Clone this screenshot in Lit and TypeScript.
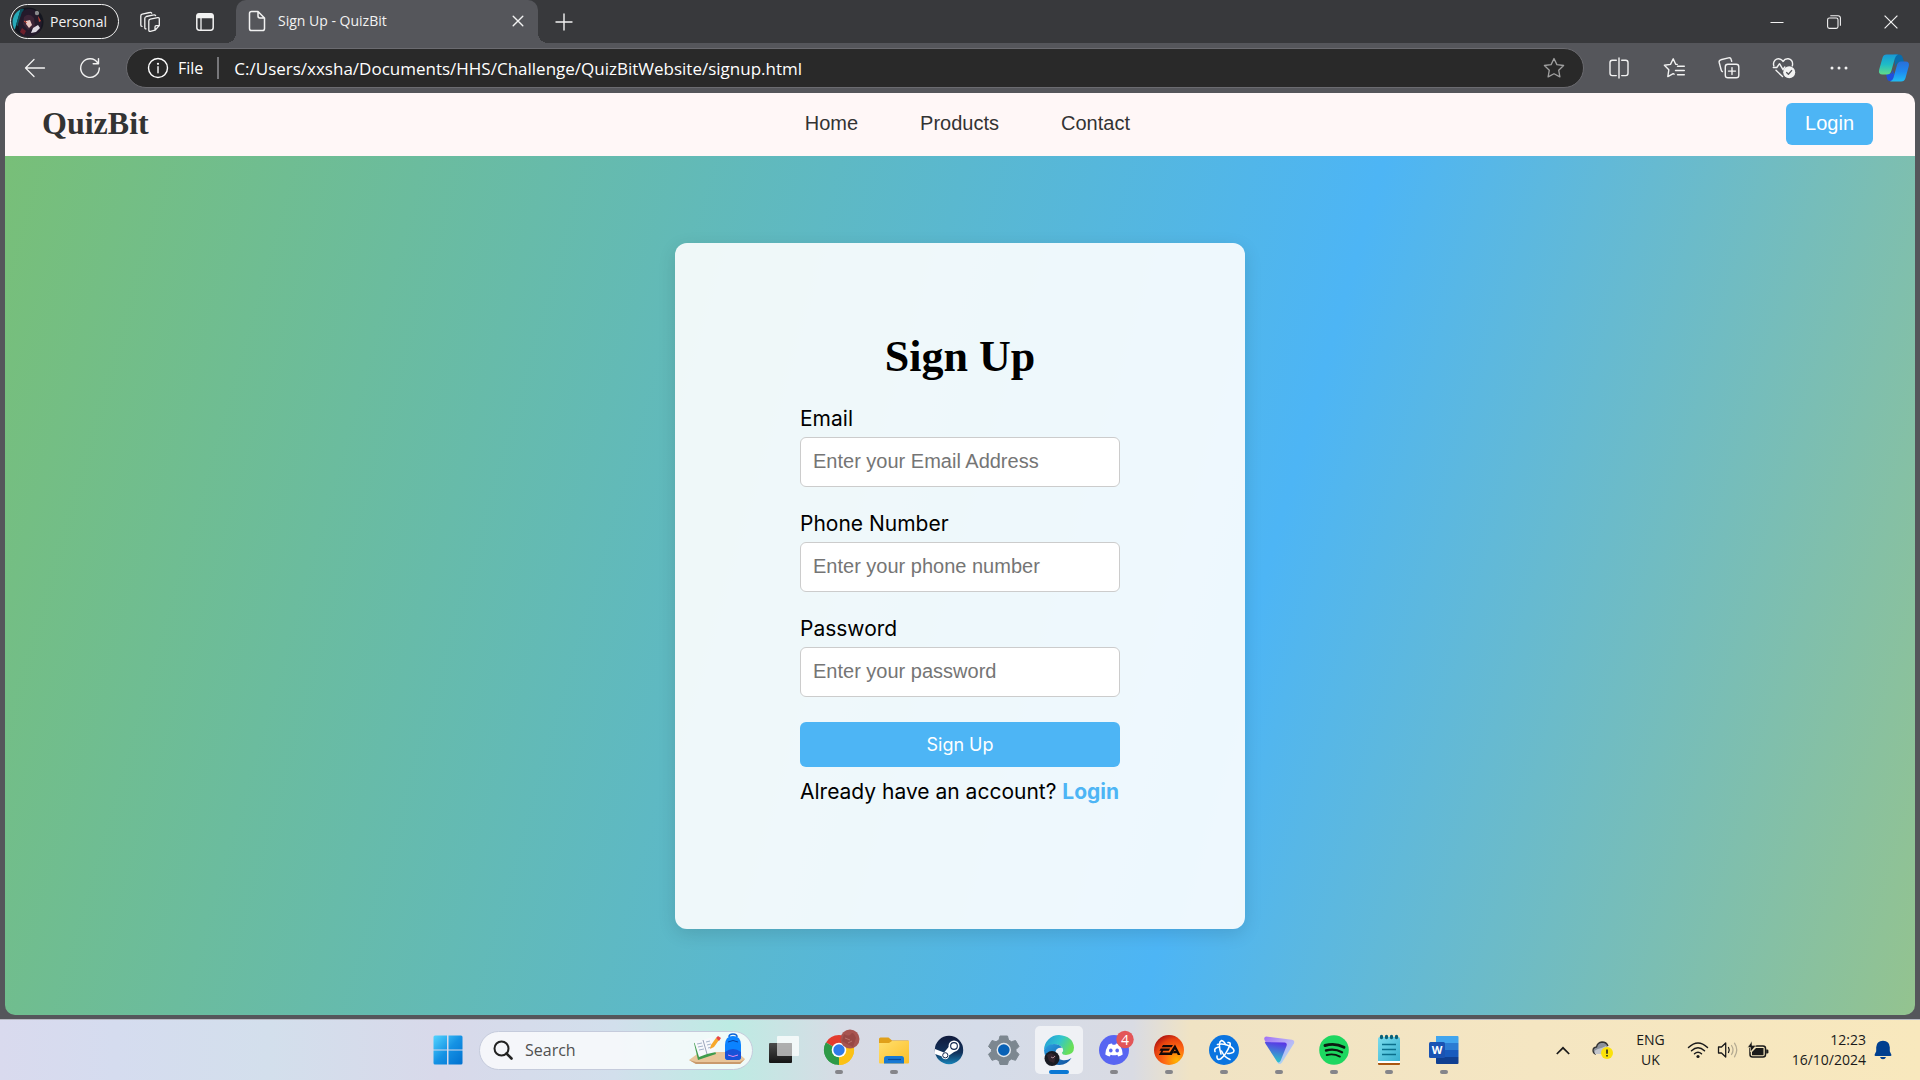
import { LitElement, html, css, nothing } from "lit";
import type { TemplateResult } from "lit";
import { customElement } from "lit/decorators.js";
import { classMap } from "lit/directives/class-map.js";

const icons = {
  workspaces: html`<svg width="22" height="22" viewBox="0 0 22 22" fill="none" stroke="currentColor" stroke-width="1.3" stroke-linejoin="round" stroke-linecap="round">
    <path d="M11.3 8.2 18.6 6.6Q20.3 6.3 20.3 8V14.6L16 19.2 11.4 20.3Q9.8 20.6 9.8 19V10Q9.8 8.5 11.3 8.2ZM20.2 14.6H17.3Q16 14.6 16 15.9V19" />
    <path d="M7 17.8Q5.8 17.9 5.8 16.4V7.4Q5.8 5.9 7.2 5.5L14.8 3.9Q16 3.6 16.6 4.6" />
    <path d="M3 15.4Q1.8 15.3 1.8 14V4.9Q1.8 3.4 3.2 3.1L10.8 1.5Q12 1.2 12.7 2.2" />
  </svg>`,
  tabActions: html`<svg width="20" height="20" viewBox="0 0 20 20">
    <rect x="1.8" y="1.8" width="16.4" height="16.4" rx="2.6" fill="none" stroke="currentColor" stroke-width="1.5" />
    <path d="M1.5 6.2V4Q1.5 1.5 4 1.5h12Q18.5 1.5 18.5 4v2.200z" fill="currentColor" />
    <path d="M6 6v12" stroke="currentColor" stroke-width="1.3" />
  </svg>`,
  page: html`<svg width="18" height="22" viewBox="0 0 18 22" fill="none" stroke="currentColor" stroke-width="1.5" stroke-linejoin="round">
    <path d="M3.600 1.500H10L16.500 8v10.400q0 2.100-2.100 2.100H3.600q-2.100 0-2.100-2.100V3.600q0-2.100 2.100-2.100zM10 1.500v4.600Q10 8 11.900 8h4.600" />
  </svg>`,
  close: html`<svg width="12" height="12" viewBox="0 0 12 12" fill="none" stroke="currentColor" stroke-width="1.4" stroke-linecap="round"><path d="M1.200 1.200l9.600 9.600M10.800 1.200l-9.600 9.600" /></svg>`,
  plus: html`<svg width="18" height="18" viewBox="0 0 18 18" fill="none" stroke="currentColor" stroke-width="1.4" stroke-linecap="round"><path d="M9 1v16M1 9h16" /></svg>`,
  minimise: html`<svg width="14" height="14" viewBox="0 0 14 14" stroke="currentColor"><path d="M.5 7.500h13" /></svg>`,
  restore: html`<svg width="14" height="14" viewBox="0 0 14 14" fill="none" stroke="currentColor" stroke-width="1.100">
    <rect x=".6" y="3" width="10.400" height="10.400" rx="1.800" /><path d="M3.300.7h7.700q2.400 0 2.400 2.400v7.700" />
  </svg>`,
  winClose: html`<svg width="14" height="14" viewBox="0 0 14 14" fill="none" stroke="currentColor" stroke-width="1.200"><path d="M.6.6l12.800 12.800M13.400.6L.6 13.400" /></svg>`,
  back: html`<svg width="22" height="20" viewBox="0 0 22 20" fill="none" stroke="currentColor" stroke-width="1.300" stroke-linecap="round" stroke-linejoin="round"><path d="M10 1.500L1.500 10l8.500 8.500M1.500 10h19" /></svg>`,
  reload: html`<svg width="22" height="22" viewBox="0 0 22 22" fill="none" stroke="currentColor" stroke-width="1.400" stroke-linecap="round" stroke-linejoin="round"><path d="M18.800 6A9.300 9.300 0 1 0 20.300 11M19.500 1.600v5.200h-5.300" /></svg>`,
  info: html`<svg width="22" height="22" viewBox="0 0 22 22" fill="none" stroke="currentColor" stroke-width="1.400"><circle cx="11" cy="11" r="9.500" /><path d="M11 9.700v6" stroke-linecap="round" /><circle cx="11" cy="6.800" r="1.100" fill="currentColor" stroke="none" /></svg>`,
  star: html`<svg width="22" height="22" viewBox="0 0 22 22" fill="none" stroke="currentColor" stroke-width="1.300" stroke-linejoin="round"><path d="M11 1.500l2.900 6.100 6.700.9-4.900 4.700 1.200 6.700L11 16.700l-5.900 3.200 1.200-6.700L1.400 8.500l6.700-.9z" /></svg>`,
  split: html`<svg width="20" height="22" viewBox="0 0 20 22" fill="none" stroke="currentColor" stroke-width="1.400" stroke-linecap="round"><path d="M7.300 3.200H3.300Q1 3.200 1 5.500v10.800q0 2.300 2.300 2.300h4M12.700 3.200h4Q19 3.200 19 5.500v10.800q0 2.300-2.300 2.300h-4M10 1v20" /></svg>`,
  favourites: html`<svg width="22" height="22" viewBox="0 0 22 22" fill="none" stroke="currentColor" stroke-width="1.400" stroke-linecap="round" stroke-linejoin="round"><path d="M14.200 7.400l-1.500-.2L10.200 1.800 7.500 7.400l-6.100.9 4.400 4.500-1 6.800 5.400-2.900.9.500M14.500 9.200h6.800M12.500 13.500h8.800M14.500 17.800h6.800" /></svg>`,
  collections: html`<svg width="22" height="22" viewBox="0 0 22 22" fill="none" stroke="currentColor" stroke-width="1.400" stroke-linecap="round" stroke-linejoin="round"><rect x="7.300" y="7.300" width="13.500" height="13.500" rx="2.600" /><path d="M14 10.600v7M10.500 14.100h7M4.400 14.600Q3.500 14.200 3.200 13L1.200 5.500Q.7 3.400 2.800 2.800L10.500.9q2.200-.5 2.700 1.600l.5 1.900" /></svg>`,
  health: html`<svg width="24" height="22" viewBox="0 0 24 22" fill="none" stroke="currentColor" stroke-width="1.400" stroke-linecap="round" stroke-linejoin="round">
    <path d="M1.800 8.800Q.8 5.600 3 3.200q2.600-2.500 5.700-.8Q10.200 3.200 11 4.500q2-3.100 5.300-2.700 4.300.8 4.300 5.300 0 1-.3 1.800M1.300 10.500h3.500L7.500 6.700l3.500 6 1.800-2.700M4 13.300l6.500 6.200" />
    <circle cx="17.200" cy="15.200" r="6" fill="currentColor" stroke="none" /><path d="M14.600 15.600l1.800 1.600 3.200-3.600" stroke="#55565b" />
  </svg>`,
  dots: html`<svg width="18" height="4" viewBox="0 0 18 4" fill="currentColor"><circle cx="2" cy="2" r="1.500" /><circle cx="9" cy="2" r="1.500" /><circle cx="16" cy="2" r="1.500" /></svg>`,
  copilot: html`<svg width="32" height="30" viewBox="0 0 32 30">
    <defs>
      <linearGradient id="cpA" x1="0" y1="0" x2="0" y2="1"><stop offset="0" stop-color="#1899d6" /><stop offset=".5" stop-color="#1fbcc6" /><stop offset="1" stop-color="#62dc88" /></linearGradient>
      <linearGradient id="cpB" x1="0" y1="0" x2="0" y2="1"><stop offset="0" stop-color="#2a6fd8" /><stop offset=".5" stop-color="#1e88f0" /><stop offset="1" stop-color="#20bdf2" /></linearGradient>
    </defs>
    <path d="M16 1.500h5q2.800 0 3.700 3L26 9h-3.500q-3 0-4.500 3l-1 2z" fill="#0a6cab" />
    <path d="M8 21h3q3-.5 4-4l1.500 4-1.500 7h-3.500Q9.500 28 8.800 24.500z" fill="#1f4fdc" />
    <path d="M8.500 1.500H20q-2.300.8-3.200 4L13.300 18q-1 3.500-4.500 3.500H4.500Q0 21.500 1.200 16.500L4.600 4.600Q5.500 1.500 8.500 1.500z" fill="url(#cpA)" />
    <path d="M18 10.500L15.500 19.500q-.9 1.500-1.900 1.500 1.300-1 1.900-3z" fill="#55565b" />
    <path d="M23 8.500h4.500q4.300 0 3.300 4.500l-3.300 12q-1 3.500-4.500 3.500H12q2.500-.5 3.400-3.500L19 12q1-3.500 4-3.500z" fill="url(#cpB)" />
  </svg>`,
  avatar: html`<svg width="32" height="30" viewBox="0 0 32 30">
    <defs><clipPath id="av"><ellipse cx="16" cy="15" rx="15.500" ry="14.500" /></clipPath></defs>
    <g clip-path="url(#av)">
      <rect width="32" height="30" fill="#14161f" />
      <path d="M0 30V3L9 1 3 22z" fill="#28a9b8" /><path d="M9 1l3 1-6 17-2-1z" fill="#0d5360" />
      <path d="M10 5q6-6 14-1l6 11-3 15H9L6 17z" fill="#241a2b" />
      <path d="M12 10q5-5 10 1l1 9-7 3-5-6z" fill="#3d2537" />
      <path d="M14 14l4-1 2 5-3 3-3-4z" fill="#e9c7c2" /><path d="M21 21l5-3 2 3-4 4-5 1z" fill="#ded9e2" />
      <circle cx="25" cy="6" r="2.200" fill="#8a8a8d" /><path d="M26 9l3 5-2 1z" fill="#bd4134" /><path d="M10 21l4 3-2 4-4-3z" fill="#6d1f2b" /><path d="M12 14l3 2" stroke="#d4523e" />
    </g>
  </svg>`,
  start: html`<svg width="30" height="30" viewBox="0 0 30 30"><defs><linearGradient id="wn" x1="0" y1="0" x2="1" y2="1"><stop offset="0" stop-color="#52d4ff" /><stop offset=".5" stop-color="#1592e4" /><stop offset="1" stop-color="#0070cf" /></linearGradient></defs>
    <path d="M2 .5h12v14H.5V2Q.5.5 2 .5zM15.500.5H28q1.500 0 1.500 1.500v12.500h-14zM.5 15.500H14v14H2q-1.500 0-1.500-1.500zM15.500 15.500h14V28q0 1.500-1.500 1.500H15.500z" fill="url(#wn)" /></svg>`,
  magnifier: html`<svg width="20" height="20" viewBox="0 0 20 20" fill="none" stroke="#222" stroke-width="2"><circle cx="8.500" cy="8.500" r="7" /><path d="M13.500 13.500l5 5" stroke-width="2.600" stroke-linecap="round" /></svg>`,
  studyArt: html`<svg width="58" height="34" viewBox="0 0 58 34">
    <path d="M1 27L12 19H49l8 7-5 5H8z" fill="#e8c59a" /><path d="M1 27l7 2h44l5-3-5 5H8z" fill="#c99a6d" />
    <path d="M6 10l17-4 5 15-18 6z" fill="#3f9b4c" /><path d="M6 8l9-1 9-3 4 15-9 2-8 3z" fill="#f7f8fc" /><path d="M15 7l4 14" stroke="#9aa3b8" />
    <path d="M9 11l5-1M10 14l5-1M11 17l5-1M18 9l4-1M19 12l4-1M20 15l4-1" stroke="#a5b3c9" />
    <path d="M22 16l1-4 5-7 3 2-5 7z" fill="#f7a82a" /><path d="M28 5l2-2 3 2-2 3z" fill="#e84545" />
    <path d="M41 4q0-3 4-3t4 3" fill="none" stroke="#0e62d6" stroke-width="1.500" />
    <path d="M37 12q0-9 8-9t8 9v12q0 3-3 3H40q-3 0-3-3z" fill="#0b83ff" /><path d="M37 19q8-6 16 0v5q0 3-3 3H40q-3 0-3-3z" fill="#1652d8" /><path d="M40 22q5 3 10 0" stroke="#e58af0" fill="none" /><path d="M40 9q5-3 10 0" stroke="#073f9f" fill="none" />
  </svg>`,
};

const taskIcons: Record<string, TemplateResult> = {
  view: html`<svg width="32" height="32" viewBox="0 0 32 32"><defs><linearGradient id="tv" x1="0" y1="0" x2="0" y2="1"><stop offset="0" stop-color="#4b4b4b" /><stop offset="1" stop-color="#151515" /></linearGradient></defs>
    <rect x="1" y="9" width="23" height="20" rx="1" fill="url(#tv)" /><rect x="9" y="2" width="22" height="20" rx="1" fill="#fff" fill-opacity=".75" /><path d="M9 9h15v13H9z" fill="#8b8b8b" fill-opacity=".5" /></svg>`,
  chrome: html`<svg width="38" height="38" viewBox="0 0 38 38">
    <path d="M19 19L6 11.500A15 15 0 0 1 32 11.500z" fill="#e33b2e" /><path d="M19 19L32 11.500A15 15 0 0 1 19 34z" fill="#fbc116" /><path d="M19 19L19 34A15 15 0 0 1 6 11.500z" fill="#2d9a47" />
    <path d="M19 12h13.300a15 15 0 0 1-13.300 22l6-11.500z" fill="#fbc116" /><path d="M6 11.500l6.900 11 6.400 3.500-4 7.500A15 15 0 0 1 6 11.500z" fill="#2d9a47" />
    <circle cx="19" cy="19" r="7.300" fill="#fff" /><circle cx="19" cy="19" r="5.700" fill="#2e7bea" />
    <circle cx="30" cy="8" r="9.500" fill="#a75450" /><path d="M24 3q5 3 7 0t5 4l-3 9-6-3-5-3z" fill="#984845" /><path d="M25 7l5 2M28 12l4-2" stroke="#b9736c" fill="none" /></svg>`,
  folder: html`<svg width="32" height="30" viewBox="0 0 32 30"><defs><linearGradient id="fd" x1="0" y1="0" x2="1" y2="1"><stop offset="0" stop-color="#ffdf6e" /><stop offset="1" stop-color="#fcbf28" /></linearGradient></defs>
    <path d="M1 4q0-1.500 1.500-1.500h8L14 5.500h16q1 0 1 1V12H1z" fill="#e0a01a" /><path d="M1 8h10l3-2h17v21.500q0 1-1 1H2q-1 0-1-1z" fill="url(#fd)" /><path d="M6 28.500v-5q0-2.500 2.500-2.500h15q2.500 0 2.500 2.500v5z" fill="#1879d3" /><path d="M10 24.500h13" stroke="#0a4c98" stroke-width="1.200" /></svg>`,
  steam: html`<svg width="30" height="30" viewBox="0 0 30 30"><defs><linearGradient id="st" x1="0" y1="0" x2="0" y2="1"><stop offset="0" stop-color="#101a3c" /><stop offset=".6" stop-color="#12335c" /><stop offset="1" stop-color="#1783b8" /></linearGradient></defs>
    <circle cx="15" cy="15" r="14.200" fill="url(#st)" /><path d="M1 14l9 3.500 5.500-6.500 6 5-6.500 4.500q0 3-3 3.700-3.500.3-4.500-3L1 19z" fill="#fff" /><circle cx="20" cy="11" r="5.500" fill="#fff" /><circle cx="20" cy="11" r="3.900" fill="#14294f" /><circle cx="20" cy="11" r="2.800" fill="#fff" /><circle cx="11.300" cy="20.300" r="2.600" fill="none" stroke="#14294f" /></svg>`,
  settings: html`<svg width="32" height="30" viewBox="0 0 32 30"><path d="M12 1h7.500l1 4 3 1.700 4-1.200 3.500 6-3 3v1.800l3 3-3.500 6-4-1.200-3 1.700-1 3.700H12l-1-3.700-3-1.700-4 1.200-3.500-6 3-3v-1.800l-3-3 3.500-6 4 1.200 3-1.700z" fill="#7c8790" stroke="#7c8790" stroke-linejoin="round" /><circle cx="15.800" cy="15" r="7.200" fill="#e3e8ee" /><circle cx="15.800" cy="15" r="5.800" fill="#0861b6" /></svg>`,
  edge: html`<svg width="32" height="32" viewBox="0 0 32 32"><defs>
      <linearGradient id="e1" x1="0" y1="0" x2="1" y2=".4"><stop offset="0" stop-color="#2497d8" /><stop offset=".55" stop-color="#31c5ce" /><stop offset="1" stop-color="#68df58" /></linearGradient>
      <linearGradient id="e2" x1="0" y1="0" x2="1" y2="1"><stop offset="0" stop-color="#2a9fe2" /><stop offset="1" stop-color="#0f4f9e" /></linearGradient></defs>
    <path d="M1 16A15 15 0 0 1 16 1q14 1 15 12.500 0 7-8 7.500-4 0-4-2.500 2-1.500.5-4.500Q16 9.500 10 10.500 4 11.500 1 16z" fill="url(#e1)" />
    <path d="M1 16q3-6 10-6 6 0 8 4-5-1-6.500 3.500-.7 7 6.500 8.500 5 1 9.500-2Q24 31 16.500 31 2 30.500 1 16z" fill="url(#e2)" />
    <circle cx="9" cy="24.500" r="7.500" fill="#191a22" /><path d="M4 21l4-2 5 3-2 7-5-2z" fill="#33242e" /><path d="M8 23l2 1 2-2" stroke="#a98b96" fill="none" /></svg>`,
  discord: html`<svg width="38" height="38" viewBox="0 0 38 38"><circle cx="19" cy="19" r="15" fill="#5865f2" />
    <path d="M13.500 13.500q2-1 3.500-1.100l.6 1.300h2.800l.6-1.300q1.500.1 3.500 1.100 3 5 3.200 10-2 1.700-4.400 2.100l-1-1.800q-3.300 1-6.600 0l-1 1.800q-2.400-.4-4.400-2.100.2-5 3.200-10z" fill="#fff" /><ellipse cx="15.800" cy="19.500" rx="1.800" ry="2" fill="#5865f2" /><ellipse cx="22.200" cy="19.500" rx="1.800" ry="2" fill="#5865f2" />
    <circle cx="30" cy="8.500" r="8.700" fill="#e35558" /></svg>`,
  ea: html`<svg width="32" height="32" viewBox="0 0 32 32"><defs><radialGradient id="ea" cx=".75" cy=".85" r=".9"><stop offset="0" stop-color="#ffb400" /><stop offset=".45" stop-color="#ff6a13" /><stop offset=".8" stop-color="#e8420f" /><stop offset="1" stop-color="#b91c10" /></radialGradient></defs>
    <circle cx="16" cy="16" r="15" fill="url(#ea)" /><path d="M10 11h10l-1.500 2.300H8.700zM7.700 14.500h9.500l-1.500 2.200h-5.400L9.200 18.500h7.500l5.300-8 5.500 10.400h-2.700l-.9-1.700h-4l1.200-2.100h1.700l-.9-1.800-3.100 5.600H5.800l2.600-4.200H6.500z" fill="#140808" /></svg>`,
  bnet: html`<svg width="32" height="32" viewBox="0 0 32 32"><circle cx="16" cy="16" r="15" fill="#0a74e0" /><g fill="none" stroke="#fff" stroke-width="1.600" stroke-linecap="round">
    <path d="M13 20Q9.500 8 13.500 6.500 16 7 17.500 10.500" /><path d="M9.500 10.500q6-1.500 12 1.500 6 3.500 4 6-1.500 1.500-6 1.500" /><path d="M22 11q-4 10-9.500 14-4 1.500-3.500-3" /><path d="M7 17.500q-1.500-3.500 4-4.500M20 8.500q3-.5 2 3M13.500 17q3 6.500 8.500 8.500" /></g></svg>`,
  proton: html`<svg width="32" height="30" viewBox="0 0 32 30"><defs><linearGradient id="p1" x1="0" y1="0" x2="1" y2="1"><stop offset="0" stop-color="#a06ff5" /><stop offset=".5" stop-color="#b9b0f7" /><stop offset="1" stop-color="#a7f0ee" /></linearGradient><linearGradient id="p2" x1=".6" y1="0" x2=".4" y2="1"><stop offset="0" stop-color="#5a35e6" /><stop offset="1" stop-color="#28c9c6" /></linearGradient></defs>
    <path d="M3 1.500l26 3.200q3 .5 2 3.500L19 27.500q-2.500 3-4.500 0L1.500 5Q.5 2 3 1.500z" fill="url(#p1)" /><path d="M1.800 7Q2.200 8.200 3 9.500l11 17q2 2 3.500-.5l6-15q1-3-1.500-3.500z" fill="url(#p2)" /></svg>`,
  spotify: html`<svg width="32" height="32" viewBox="0 0 32 32"><circle cx="16" cy="16" r="14.800" fill="#1ed760" /><g fill="none" stroke="#0b1a10" stroke-linecap="round"><path d="M7 11.500q10-3 19 1.800" stroke-width="2.900" /><path d="M8 16.500q8.500-2.300 16 1.700" stroke-width="2.400" /><path d="M8.700 21q7-1.800 13.200 1.600" stroke-width="1.900" /></g></svg>`,
  notepad: html`<svg width="24" height="32" viewBox="0 0 24 32"><defs><linearGradient id="np" x1="0" y1="0" x2="1" y2="1"><stop offset="0" stop-color="#7bdcee" /><stop offset="1" stop-color="#37b0cf" /></linearGradient></defs>
    <path d="M1 27h22v3q0 1-1 1H2q-1 0-1-1z" fill="#a9560f" /><path d="M1 25h22v4H1z" fill="#fff" /><path d="M3 3h18q2 0 2 2v22H1V5q0-2 2-2z" fill="url(#np)" /><path d="M5 10.500h14M5 15.500h14M5 20.500h14" stroke="#0b6f8c" stroke-width="1.500" /><g fill="#0a6078"><ellipse cx="4.500" cy="3" rx="1.700" ry="2.200" /><ellipse cx="9.500" cy="3" rx="1.700" ry="2.200" /><ellipse cx="14.500" cy="3" rx="1.700" ry="2.200" /><ellipse cx="19.500" cy="3" rx="1.700" ry="2.200" /></g></svg>`,
  word: html`<svg width="30" height="30" viewBox="0 0 30 30"><path d="M7 1h21.500q1 0 1 1v6H7z" fill="#41a5ee" /><path d="M7 8h22.500v7H7z" fill="#2b7cd3" /><path d="M7 15h22.500v7H7z" fill="#185abd" /><path d="M7 22h22.500v6q0 1-1 1H8q-1 0-1-1z" fill="#103f91" /><rect x="0" y="7" width="16" height="16" rx="1.500" fill="#1a53b3" /><text x="8" y="19" text-anchor="middle" fill="#fff" font-family="Open Sans, sans-serif" font-weight="700" font-size="11">W</text></svg>`,
};

const trayIcons = {
  chevron: html`<svg width="14" height="9" viewBox="0 0 14 9" fill="none" stroke="#1a1a1a" stroke-width="1.700"><path d="M.8 8L7 1.800 13.200 8" /></svg>`,
  cloud: html`<svg width="22" height="20" viewBox="0 0 22 20"><path d="M4 14Q1 13.500 1 10.500T4.500 7Q5.500 2.500 10 2q4.500 0 6 4" fill="#8b919b" stroke="#333" stroke-width="1.300" /><path d="M3 14q-1.500-4 3-5 4-1 8-3l2 5v3z" fill="#c3c6cc" /><circle cx="15" cy="13" r="6" fill="#fbe20a" /><path d="M15 9.500v4.300M15 15v1.600" stroke="#222" stroke-width="1.600" /></svg>`,
  wifi: html`<svg width="22" height="18" viewBox="0 0 22 18" fill="none" stroke="#1a1a1a" stroke-width="1.500" stroke-linecap="round"><path d="M1.500 6.500Q11-2.500 20.500 6.500M4.500 9.700q6.500-6 13 0M7.500 12.700q3.500-3 7 0" /><circle cx="11" cy="15.500" r="1.600" fill="#1a1a1a" stroke="none" /></svg>`,
  volume: html`<svg width="22" height="18" viewBox="0 0 22 18" fill="none" stroke="#1a1a1a" stroke-width="1.300" stroke-linecap="round" stroke-linejoin="round"><path d="M1.500 6h3l4.200-4v14l-4.200-4h-3zM11.500 6.500q1.500 2.500 0 5" /><path d="M14.500 4.500q3 4.500 0 9M17.500 2.200q4.500 6.800 0 13.600" stroke="#b5ab93" /></svg>`,
  battery: html`<svg width="22" height="18" viewBox="0 0 22 18"><rect x="3" y="5" width="15.500" height="11" rx="2.500" fill="none" stroke="#1a1a1a" stroke-width="1.500" /><path d="M5 14.200V11l4-4h7.500v7.200z" fill="#1a1a1a" /><path d="M19.200 8.500h1q1.200 0 1.200 1.200v1.600q0 1.200-1.200 1.200h-1z" fill="#1a1a1a" /><path d="M5 0v4.500h4L3.500 11V6.500H.5z" fill="#1a1a1a" stroke="#f7e7c0" stroke-width=".6" /></svg>`,
  bell: html`<svg width="18" height="20" viewBox="0 0 18 20" fill="#003f8f"><path d="M9 .8q6.500 0 6.800 6.500v4l1.600 3.500q.2 1.200-1 1.200H1.600q-1.200 0-1-1.200l1.600-3.500v-4Q2.500.8 9 .8zM6 17h6q-.7 2.300-3 2.300T6 17z" /></svg>`,
};

interface Field { id: string; label: string; type: string; placeholder: string; }
const fields: Field[] = [
  { id: "email", label: "Email", type: "email", placeholder: "Enter your Email Address" },
  { id: "phone", label: "Phone Number", type: "tel", placeholder: "Enter your phone number" },
  { id: "password", label: "Password", type: "password", placeholder: "Enter your password" },
];

interface Task { icon: string; name: string; running?: boolean; active?: boolean; badge?: string; }
const tasks: Task[] = [
  { icon: "view", name: "Task view" },
  { icon: "chrome", name: "Chrome", running: true },
  { icon: "folder", name: "File Explorer", running: true },
  { icon: "steam", name: "Steam" },
  { icon: "settings", name: "Settings" },
  { icon: "edge", name: "Edge", running: true, active: true },
  { icon: "discord", name: "Discord", running: true, badge: "4" },
  { icon: "ea", name: "EA", running: true },
  { icon: "bnet", name: "Battle.net", running: true },
  { icon: "proton", name: "Proton VPN", running: true },
  { icon: "spotify", name: "Spotify", running: true },
  { icon: "notepad", name: "Notepad", running: true },
  { icon: "word", name: "Word", running: true },
];

const base = css`
  :host { display: block; }
  * { box-sizing: border-box; }
  button, input { font: inherit; color: inherit; border: 0; margin: 0; padding: 0; background: none; min-width: 0; }
  a { color: inherit; text-decoration: none; }
  svg { display: block; flex: none; overflow: visible; }
`;

@customElement("browser-chrome")
export class BrowserChrome extends LitElement {
  static styles = [base, css`
    :host { color: #f2f2f2; font-family: "Open Sans", "Noto Sans", sans-serif; background: #55565b; }
    .titlebar { display: flex; align-items: center; gap: 7px; height: 43px; padding: 0 1px 0 10px; background: #38393c; }
    .icon { width: 48px; height: 36px; flex: none; display: grid; place-items: center; }
    .profile { display: flex; align-items: center; gap: 6px; height: 35px; padding: 0 11px 0 1px; border: 1px solid #f2f2f2; border-radius: 18px; font-size: 14px; background: #2b2b2d; }
    .tab { position: relative; display: flex; align-items: center; align-self: stretch; width: 302px; padding: 0 14px 2px 12px; gap: 12px; background: #55565b; border-radius: 10px 10px 0 0; font-size: 14px; }
    .tab::before, .tab::after { content: ""; position: absolute; bottom: 0; width: 10px; height: 10px; }
    .tab::before { left: -10px; background: radial-gradient(circle at 0 0, transparent 10px, #55565b 10px); }
    .tab::after { right: -10px; background: radial-gradient(circle at 100% 0, transparent 10px, #55565b 10px); }
    .title { flex: 1; text-align: left; }
    .newtab { width: 38px; }
    .window { display: flex; margin-left: auto; }
    .window .icon { width: 57px; }
    .toolbar { display: flex; align-items: center; gap: 7px; height: 50px; padding: 0 2px 0 11px; }
    .address { display: flex; align-items: center; flex: 1; height: 40px; margin: 0 4px 0 5px; padding: 0 18px 0 20px; border: 1px solid #6b6b70; border-radius: 20px; background: #292929; color: #fff; font-size: 16px; }
    .file { display: flex; align-items: center; gap: 9px; padding-right: 14px; border-right: 2px solid #77777a; line-height: 22px; }
    .url { flex: 1; padding-left: 15px; outline: 0; font-size: 17px; }
    .star { color: #a0a0a0; }
  `];

  render() {
    return html`
      <div class="titlebar">
        <button class="profile">${icons.avatar}<span>Personal</span></button>
        <button class="icon" aria-label="Workspaces">${icons.workspaces}</button>
        <button class="icon" aria-label="Tab actions">${icons.tabActions}</button>
        <div class="tab">
          ${icons.page}<span class="title">Sign Up - QuizBit</span>
          <button aria-label="Close tab">${icons.close}</button>
        </div>
        <button class="icon newtab" aria-label="New tab">${icons.plus}</button>
        <div class="window">
          <button class="icon" aria-label="Minimise">${icons.minimise}</button>
          <button class="icon" aria-label="Restore">${icons.restore}</button>
          <button class="icon" aria-label="Close">${icons.winClose}</button>
        </div>
      </div>
      <div class="toolbar">
        <button class="icon" aria-label="Back">${icons.back}</button>
        <button class="icon" aria-label="Refresh">${icons.reload}</button>
        <div class="address">
          <button class="file">${icons.info}<span>File</span></button>
          <input class="url" aria-label="Address" value="C:/Users/xxsha/Documents/HHS/Challenge/QuizBitWebsite/signup.html" />
          <button class="star" aria-label="Add to favourites">${icons.star}</button>
        </div>
        <button class="icon" aria-label="Split screen">${icons.split}</button>
        <button class="icon" aria-label="Favourites">${icons.favourites}</button>
        <button class="icon" aria-label="Collections">${icons.collections}</button>
        <button class="icon" aria-label="Browser essentials">${icons.health}</button>
        <button class="icon" aria-label="More">${icons.dots}</button>
        <button class="icon" aria-label="Copilot">${icons.copilot}</button>
      </div>`;
  }
}

@customElement("signup-page")
export class SignupPage extends LitElement {
  static styles = [base, css`
    :host { display: flex; flex-direction: column; font-family: "Liberation Sans", Arial, sans-serif; font-size: 20px; }
    .nav { display: flex; align-items: center; justify-content: space-between; height: 63px; padding: 0 42px 2px 37px; background: #fff7f7; color: #333; }
    .brand { font-family: "Liberation Serif", serif; font-weight: 700; font-size: 32px; }
    .links { display: flex; gap: 62px; }
    .login { height: 42px; padding: 0 19px; border-radius: 6px; background: #4db5f5; color: #fff; }
    .hero { flex: 1; display: grid; place-items: center; padding: 40px; background: linear-gradient(106deg, #78bf78 0%, #4db5f5 64%, #94c38f 100%); }
    .card { padding: 80px 125px 125px; border-radius: 12px; background: rgba(255, 255, 255, 0.9); box-shadow: 0 5px 18px rgba(0, 0, 0, 0.12); color: #000; font-family: Inter, "Open Sans", sans-serif; }
    .form { display: flex; flex-direction: column; min-width: 320px; font-size: 21px; }
    .heading { margin: 2px 0 18px; text-align: center; font: 700 44px/64px "Liberation Serif", serif; }
    .label { line-height: 24px; margin-bottom: 6px; }
    .input { height: 50px; margin-bottom: 25px; padding: 0 12px; border: 1px solid #ccc; border-radius: 6px; background: #fff; font-family: "Liberation Sans", Arial, sans-serif; font-size: 20px; }
    .input::placeholder { color: #757575; opacity: 1; }
    .submit { height: 45px; border-radius: 6px; background: #4db5f5; color: #fff; font-size: 18px; }
    .note { margin: 13px 0 0; line-height: 24px; white-space: nowrap; }
    .note a { color: #4db5f5; font-weight: 700; }
  `];

  render() {
    return html`
      <header class="nav">
        <a class="brand" href="#">QuizBit</a>
        <nav class="links"><a href="#home">Home</a><a href="#products">Products</a><a href="#contact">Contact</a></nav>
        <button class="login">Login</button>
      </header>
      <main class="hero">
        <section class="card">
          <form class="form" @submit=${(e: Event) => e.preventDefault()}>
            <h1 class="heading">Sign Up</h1>
            ${fields.map((f) => html`
              <label class="label" for=${f.id}>${f.label}</label>
              <input class="input" id=${f.id} type=${f.type} placeholder=${f.placeholder} />`)}
            <button class="submit" type="submit">Sign Up</button>
            <p class="note">Already have an account? <a href="#login">Login</a></p>
          </form>
        </section>
      </main>`;
  }
}

@customElement("task-bar")
export class TaskBar extends LitElement {
  static styles = [base, css`
    :host { display: grid; grid-template-columns: 1fr auto 1fr; align-items: center; height: 60px; padding-right: 28px; border-top: 1px solid #b9bac4; color: #1a1a1a; font-family: "Open Sans", "Noto Sans", sans-serif; font-size: 14px;
      background: linear-gradient(90deg, #d9daee 0%, #d5dcef 6%, #d3dfec 14%, #d8d9ea 23%, #d2dfec 32%, #bdebe3 38%, #d8dbe5 44%, #d5dce9 51%, #d9dbe3 59%, #f0e3c4 62%, #f5e6c2 80%, #f8e8bd 100%); }
    .apps { grid-column: 2; display: flex; align-items: center; gap: 7px; }
    .app { position: relative; width: 48px; height: 48px; display: grid; place-items: center; border-radius: 5px; }
    .active { background: rgba(255, 255, 255, 0.6); }
    .mark { position: absolute; left: 50%; bottom: 0; width: 8px; height: 4px; border-radius: 2px; background: #85858a; transform: translateX(-50%); }
    .active .mark { width: 20px; background: #0a78d4; }
    .badge { position: absolute; top: 5px; right: 4px; width: 18px; color: #fff; line-height: 18px; text-align: center; }
    .search { display: flex; align-items: center; gap: 12px; width: 274px; height: 39px; padding: 0 6px 0 13px; border: 1px solid #c5cbdc; border-radius: 20px; background: rgba(255, 255, 255, 0.75); font-size: 16px; }
    .query { flex: 1; outline: 0; }
    .query::placeholder { color: #505050; opacity: 1; }
    .tray { display: flex; align-items: center; justify-content: flex-end; }
    .tray button { flex: none; }
    .overflow { margin-right: 22px; }
    .lang { margin: 0 22px; text-align: center; line-height: 20px; }
    .status { display: flex; gap: 8px; margin-right: 23px; }
    .clock { margin-right: 8px; text-align: right; line-height: 20px; }
  `];

  render() {
    return html`
      <div class="apps">
        <button class="app" aria-label="Start">${icons.start}</button>
        <label class="search">${icons.magnifier}<input class="query" type="text" placeholder="Search" aria-label="Search" />${icons.studyArt}</label>
        ${tasks.map((t) => html`
          <button class=${classMap({ app: true, active: !!t.active })} aria-label=${t.name}>
            ${taskIcons[t.icon]}
            ${t.badge ? html`<span class="badge">${t.badge}</span>` : nothing}
            ${t.running ? html`<span class="mark"></span>` : nothing}
          </button>`)}
      </div>
      <div class="tray">
        <button class="overflow" aria-label="Hidden icons">${trayIcons.chevron}</button>
        <button aria-label="Cloud sync">${trayIcons.cloud}</button>
        <button class="lang">ENG<br />UK</button>
        <button class="status" aria-label="Network, volume and battery">${trayIcons.wifi}${trayIcons.volume}${trayIcons.battery}</button>
        <button class="clock">12:23<br />16/10/2024</button>
        <button aria-label="Notifications">${trayIcons.bell}</button>
      </div>`;
  }
}

@customElement("app-root")
export class AppRoot extends LitElement {
  static styles = css`
    :host { display: block; }
    .screen { display: flex; flex-direction: column; min-height: 100vh; background: #55565b; }
    .page { flex: 1; margin: 0 5px 4px; border-radius: 10px; overflow: hidden; }
  `;

  render() {
    return html`
      <div class="screen">
        <browser-chrome></browser-chrome>
        <signup-page class="page"></signup-page>
        <task-bar></task-bar>
      </div>`;
  }
}
